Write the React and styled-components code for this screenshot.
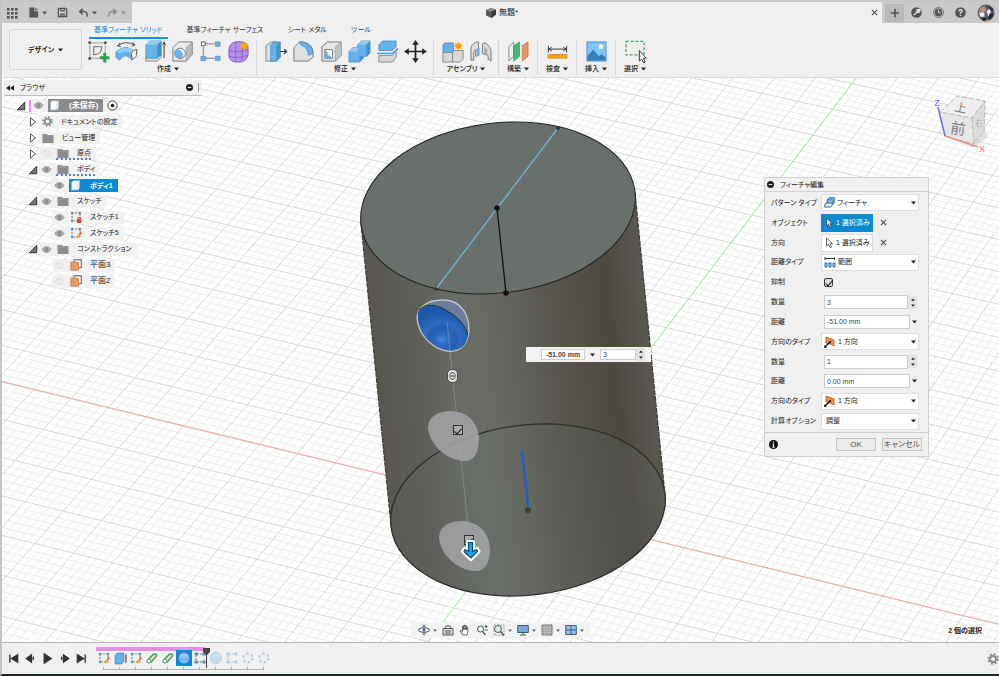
import React, { useState } from 'react';
import styled, { createGlobalStyle } from 'styled-components';

const GlobalStyle = createGlobalStyle`
  * { box-sizing: border-box; }
  body {
    margin: 0;
    background: #f0f0f0;
    color: #222;
    font-family: 'Liberation Sans', 'Noto Sans CJK JP', sans-serif;
    font-size: 8px;
    line-height: 12px;
    font-feature-settings: 'palt';
  }
  button, input, select {
    font: inherit;
    font-feature-settings: inherit;
    color: inherit;
    margin: 0;
    padding: 0;
  }
  svg { display: block; flex: none; }
`;

/* ---------- layout ---------- */

const Page = styled.div`
  min-height: 100vh;
  display: flex;
  flex-direction: column;
  border-left: 2px solid #c4c4c4;
  border-bottom: 2px solid #15262b;
`;

const TopBar = styled.header`
  display: flex;
  height: 23px;
  border-top: 2px solid #c6c6c6;
  background: #c9c9c9;
`;

const QuickBar = styled.div`
  display: flex;
  align-items: center;
  width: 130px;
  padding-left: 4px;
  gap: 10px;
`;

const IconButton = styled.button`
  display: flex;
  align-items: center;
  justify-content: center;
  gap: 3px;
  border: 0;
  background: none;
  color: ${(p) => (p.$dim ? '#8d8d8d' : '#555')};
  cursor: pointer;
`;

const DocTab = styled.div`
  flex: 1;
  display: flex;
  align-items: center;
  background: #f0f0f0;
  padding-right: 4px;
`;

const DocTitle = styled.h1`
  flex: 1;
  display: flex;
  align-items: center;
  justify-content: center;
  gap: 2px;
  margin: 0;
  font-size: 8px;
  font-weight: 400;
`;

const AccountBar = styled.div`
  display: flex;
  align-items: center;
  width: 117px;
  gap: 11px;
`;

const NewTab = styled(IconButton)`
  width: 19px;
  height: 18px;
  margin-left: 3px;
  margin-right: -4px;
  background: #b9b9b9;
`;

const Ribbon = styled.div`
  display: flex;
  height: 55px;
  border-bottom: 1px solid #dcdcdc;
  background: #f0f0f0;
`;

const Workspace = styled.button`
  width: 73px;
  margin: 6px 2px 7px 7px;
  border: 1px solid #d6d6d6;
  border-radius: 3px;
  background: #f0f0f0;
  display: flex;
  align-items: center;
  justify-content: center;
  gap: 4px;
  font-size: 7px;
  font-weight: 700;
`;

const RibbonMain = styled.div`
  flex: 1;
`;

const Tabs = styled.nav`
  display: flex;
  gap: 14px;
  height: 16px;
  padding-left: 5px;
`;

const Tab = styled.a`
  padding: 1px 5px 0;
  font-size: 7px;
  text-decoration: none;
  white-space: nowrap;
  color: ${(p) => (p.$active ? '#1287c9' : '#333')};
  border-bottom: 2px solid ${(p) => (p.$active ? '#1493d6' : 'transparent')};
`;

const Groups = styled.div`
  display: flex;
  margin-top: 1px;
  height: 35px;
`;

const Group = styled.div`
  display: flex;
  flex-direction: column;
  align-items: center;
  min-width: 39px;
  padding: 0 4px;
  border-right: 1px solid ${(p) => (p.$last ? 'transparent' : '#d8d8d8')};
  &:first-child { padding-left: 0; }
`;

const GroupIcons = styled.div`
  display: flex;
`;

const Tool = styled(IconButton)`
  width: 28px;
  height: 23px;
`;

const GroupMenu = styled(IconButton)`
  height: 12px;
  font-size: 7px;
  font-weight: 500;
  color: #222;
  white-space: nowrap;
`;

/* ---------- canvas ---------- */

const Canvas = styled.main`
  flex: 1;
  position: relative;
  overflow: hidden;
  min-height: 480px;
  background: #fff;
`;

const Scene = styled.svg`
  position: absolute;
  inset: 0;
  width: 100%;
  height: 100%;
`;

const Browser = styled.aside`
  position: absolute;
  left: 2px;
  top: 2px;
  width: 198px;
`;

const BrowserHeader = styled.div`
  display: flex;
  align-items: center;
  height: 16px;
  padding: 0 2px;
  gap: 4px;
  background: #f0f0f0;
  border-bottom: 1px solid #bdbdbd;
  font-size: 7px;
  span { flex: 1; padding-left: 2px; }
`;

const Tree = styled.div`
  display: grid;
  grid-template-rows: repeat(12, 1fr);
  height: 191px;
  margin-top: 2px;
`;

const INDENT = [11, 23, 48];

const TreeRow = styled.div`
  display: flex;
  align-items: center;
  padding-left: ${(p) => INDENT[p.$level]}px;
`;

const Toggle = styled(IconButton)`
  width: 12px;
  height: 12px;
`;

const RootMark = styled.i`
  width: 2px;
  height: 12px;
  margin-left: 2px;
  background: #e58be5;
`;

const Chip = styled.div`
  display: flex;
  align-items: center;
  gap: 4px;
  height: 13px;
  padding: 0 ${(p) => (p.$flush ? 0 : 5)}px 0 2px;
  background: #f1f1f1;
`;

const Name = styled.span`
  display: flex;
  align-items: center;
  gap: ${(p) => p.$gap}px;
  height: 13px;
  white-space: nowrap;
  font-size: ${(p) => (p.$small ? 7 : 8)}px;
  font-weight: ${(p) => (p.$tone ? 700 : 400)};
  color: ${(p) => (p.$tone ? '#fff' : '#222')};
  background: ${(p) => p.$tone || 'none'};
  padding: 0 ${(p) => (p.$tone ? 5 : 0)}px 0 1px;
  border-bottom: ${(p) => (p.$hatched ? '2px dotted #5f7fae' : '0')};
`;

const CubeBox = styled.div`
  position: absolute;
  top: 12px;
  right: 6px;
`;

const NavBar = styled.div`
  position: absolute;
  left: 50%;
  bottom: 4px;
  transform: translateX(-50%);
  display: flex;
  align-items: center;
  gap: 5px;
  height: 16px;
  padding: 0 7px;
  background: #f3f3f3;
`;

const Status = styled.output`
  position: absolute;
  right: 17px;
  bottom: 5px;
  font-size: 7px;
  font-weight: 700;
`;

/* in-canvas controls, placed on the model */
const Pin = styled.div`
  position: absolute;
  left: ${(p) => p.$x}px;
  top: ${(p) => p.$y}px;
  display: flex;
`;

const QuickInput = styled(Pin)`
  align-items: center;
  width: 125px;
  height: 15px;
  padding: 0 6px 0 15px;
  gap: 5px;
  background: #f2f2f2;
  font-size: 7px;
`;

const Check = styled.input.attrs({ type: 'checkbox' })`
  appearance: none;
  width: ${(p) => (p.$round ? 9 : 10)}px;
  height: ${(p) => (p.$round ? 9 : 10)}px;
  border: 1px solid #333;
  border-radius: ${(p) => (p.$round ? 2 : 0)}px;
  background: ${(p) => (p.$round ? '#ddd' : '#a9a9ab')};
  display: grid;
  place-content: center;
  &:checked::after {
    content: '';
    width: 3px;
    height: 6px;
    border: solid #111;
    border-width: 0 1px 1px 0;
    transform: rotate(40deg);
  }
`;

/* ---------- dialog ---------- */

const Dialog = styled.form`
  position: absolute;
  top: 99px;
  right: 70px;
  width: 165px;
  background: #f0f0f0;
  border: 1px solid #cfcfcf;
  font-size: 7px;
`;

const DialogTitle = styled.h2`
  display: flex;
  align-items: center;
  gap: 6px;
  height: 14px;
  margin: 0;
  padding-left: 2px;
  font-size: 7px;
  font-weight: 400;
  border-bottom: 1px solid #d4d4d4;
`;

const Fields = styled.div`
  display: grid;
  grid-template-rows: repeat(12, 1fr);
  height: 240px;
  padding: 1px 9px 1px 6px;
`;

const Field = styled.div`
  display: grid;
  grid-template-columns: 50px 1fr;
  align-items: center;
`;

const SelectBox = styled.span`
  position: relative;
  display: flex;
  align-items: center;
  height: 17px;
  padding: 0 2px;
  background: #fff;
  border: 1px solid #dedede;
  select {
    flex: 1;
    min-width: 0;
    height: 15px;
    padding-left: 2px;
    appearance: none;
    border: 0;
    background: none;
  }
`;

const Picked = styled.div`
  display: flex;
  align-items: center;
  gap: 7px;
`;

const Pick = styled.button`
  display: flex;
  align-items: center;
  gap: 2px;
  width: 52px;
  height: 18px;
  padding: 0 3px;
  border: 1px solid ${(p) => (p.$active ? '#0a8ad2' : '#dcdcdc')};
  background: ${(p) => (p.$active ? '#0a8ad2' : '#fff')};
  color: ${(p) => (p.$active ? '#fff' : '#222')};
  white-space: nowrap;
`;

const Inset = styled.div`
  display: flex;
  padding-left: 3px;
`;

const ValueBox = styled.span`
  display: flex;
  align-items: center;
  gap: 2px;
  padding-left: ${(p) => (p.$inset ? 3 : 0)}px;
  input {
    width: ${(p) => p.$w}px;
    height: ${(p) => (p.$inset ? 14 : 11)}px;
    padding: 0 2px;
    border: 1px solid #cdcdcd;
    background: #fff;
    color: #444;
    font-weight: ${(p) => (p.$strong ? 700 : 400)};
    text-align: ${(p) => (p.$strong ? 'center' : 'left')};
  }
`;

const Spinner = styled.span`
  display: flex;
  flex-direction: column;
  justify-content: center;
  width: 9px;
  height: 13px;
  margin-left: -2px;
  background: #e2e2e2;
  button {
    display: flex;
    align-items: center;
    justify-content: center;
    height: 6px;
    border: 0;
    background: none;
  }
`;

const DialogFooter = styled.div`
  display: flex;
  align-items: center;
  gap: 6px;
  height: 24px;
  padding: 0 6px 0 4px;
  border-top: 1px solid #cfcfcf;
  svg { margin-right: auto; }
`;

const DialogButton = styled.button`
  width: 40px;
  height: 13px;
  border: 1px solid #c2c2c2;
  background: #ececec;
  color: #555;
  font-size: 8px;
  line-height: 10px;
  white-space: nowrap;
`;

/* ---------- timeline ---------- */

const Timeline = styled.footer`
  display: flex;
  align-items: center;
  height: 32px;
  padding: 0 0 0 5px;
  border-top: 1px solid #b5b5b5;
  background: #f0f0f0;
`;

const Player = styled.div`
  display: flex;
  gap: 4px;
  button { width: 13px; height: 14px; color: #333; }
`;

const Track = styled.div`
  position: relative;
  margin: 1px auto 0 8px;
  padding-top: 4px;
  &::before {
    content: '';
    position: absolute;
    left: 0;
    top: 1px;
    width: 109px;
    height: 4px;
    background: #e392e3;
  }
`;

const Steps = styled.div`
  display: flex;
`;

const Step = styled.button`
  position: relative;
  display: flex;
  justify-content: center;
  align-items: center;
  width: 16px;
  height: 16px;
  border: 0;
  background: ${(p) => (p.$active ? '#0a8ad2' : 'none')};
  opacity: ${(p) => (p.$rolledBack ? 0.35 : 1)};
`;

const Marker = styled.svg`
  position: absolute;
  left: 106px;
  top: 1px;
`;

/* ---------- small icons ---------- */

function Caret({ up, s = 5 }) {
  return (
    <svg width={s} height={s - 1} viewBox="0 0 5 4" fill="currentColor">
      <path d={up ? 'M0 3.5h5L2.5.5z' : 'M0 .5h5L2.5 3.5z'} />
    </svg>
  );
}

function Icon({ w = 12, h, vb = '0 0 12 12', children }) {
  return (
    <svg width={w} height={h || w} viewBox={vb} fill="none" stroke="currentColor" strokeWidth="1">
      {children}
    </svg>
  );
}

const GridIcon = () => (
  <Icon w={12}>
    <g fill="currentColor" stroke="none">
      {[1, 5, 9].map((y) => [1, 5, 9].map((x) => <rect key={`${x}${y}`} x={x} y={y} width="2.6" height="2.6" />))}
    </g>
  </Icon>
);
const FileIcon = () => (
  <Icon w={11}><path d="M1.5.5H7v4h4v7H1.5zM8 .5l3 3H8z" fill="currentColor" stroke="none" /></Icon>
);
const SaveIcon = () => (
  <Icon w={11}>
    <path d="M1.5 1.5h8l1 1v8h-9z" strokeWidth="1.5" />
    <path d="M3.5 1.5h5v3.2h-5zM3.5 7h5v4h-5z" fill="currentColor" stroke="none" />
    <path d="M5 9h2M4.5 2.8h3" stroke="#c9c9c9" />
  </Icon>
);
const UndoIcon = ({ flip }) => (
  <Icon w={11}>
    <g transform={flip ? 'matrix(-1 0 0 1 12 0)' : undefined}>
      <path d="M5 2 2 5l3 3M2 5h4.5q4 0 3.5 5.5" strokeWidth="1.7" />
    </g>
  </Icon>
);
const CloseIcon = () => <Icon w={7}><path d="m1.5 1.5 9 9m0-9-9 9" strokeWidth="2" /></Icon>;
const PlusIcon = () => <Icon w={10}><path d="M6 1v10M1 6h10" strokeWidth="2" /></Icon>;
const JobIcon = () => (
  <Icon w={11}>
    <circle cx="6" cy="6" r="5.8" fill="currentColor" stroke="none" />
    <path d="m3.2 8.8 3.6-3.6M6.2 5q0-2.600 2.600-2.300L7.600 4l.7.8 1.400-1Q9.600 6.200 7 6" stroke="#e2e2e2" strokeWidth="1.5" />
  </Icon>
);
const ClockIcon = () => (
  <Icon w={11}>
    <circle cx="6" cy="6" r="5.3" strokeWidth=".9" />
    <circle cx="6" cy="6" r="4" fill="currentColor" stroke="none" />
    <path d="M6 3v3.2h2.5" stroke="#ddd" />
  </Icon>
);
const HelpIcon = () => (
  <Icon w={11}>
    <circle cx="6" cy="6" r="5.8" fill="currentColor" stroke="none" />
    <path d="M4.200 4.800Q4.300 3 6 3t1.800 1.500Q7.800 5.600 6 6.200v1.200M6 8.400v1.300" stroke="#e5e5e5" strokeWidth="1.4" />
  </Icon>
);
const Avatar = () => (
  <Icon w={18} vb="0 0 17 17">
    <circle cx="8.5" cy="8.5" r="8" fill="#59616d" stroke="none" />
    <path d="M3 3.5 7 2l2 4-3 2-4-1z" fill="#b98f84" stroke="none" />
    <path d="M2 8h5v4H3zM9 7l3-3 1 4-2 4z" fill="#eee" stroke="none" />
    <path d="M4 13h6v3H6zM12 9h4l-2 4-4 2z" fill="#1c2536" stroke="none" />
    <path d="m8 15 3-1v2H8z" fill="#d78640" stroke="none" />
    <path d="M9 1.500 15 4v3l-3-2z" fill="#263042" stroke="none" />
  </Icon>
);
const DocIcon = () => (
  <Icon w={12}>
    <path d="m1 3 5-2 5 1.500v5L6.500 11 1 8.500z" fill="#5a5a5a" stroke="none" />
    <path d="m1 3 5.300 1.700L11 2.500 6 1z" fill="#8c8c8c" stroke="none" />
    <path d="M6.400 4.700V11L11 7.500v-5z" fill="#3a3a3a" stroke="none" />
  </Icon>
);
const MinusDot = () => (
  <Icon w={7}>
    <circle cx="6" cy="6" r="6" fill="#222" stroke="none" />
    <path d="M3 6h6" stroke="#fff" strokeWidth="1.5" />
  </Icon>
);
const InfoDot = () => (
  <Icon w={9}>
    <circle cx="6" cy="6" r="6" fill="#111" stroke="none" />
    <path d="M6 2v1.800M4.800 5.500H6v4M4.600 9.500h2.800" stroke="#fff" strokeWidth="1.5" />
  </Icon>
);
const Eye = ({ off }) => (
  <Icon w={11} h={9} vb="0 0 12 10">
    {off ? (
      <g stroke="#d6d6d6"><path d="M1 5q5-6 10 0-5 6-10 0zM2 1l8 8" /></g>
    ) : (
      <g stroke="#8e8e8e">
        <path d="M.8 5Q6-1.500 11.200 5 6 11.500.8 5z" fill="#b9b9b9" />
        <circle cx="6" cy="5" r="2" fill="#777" />
        <circle cx="6" cy="5" r=".6" fill="#fff" stroke="none" />
      </g>
    )}
  </Icon>
);
const Folder = () => (
  <Icon w={12} h={10} vb="0 0 12 10">
    <path d="M.5 1h4l1 1h6v8H.5z" fill="#8c8c8c" stroke="none" />
    <path d="M.5 3h11" stroke="#adadad" strokeWidth=".6" />
  </Icon>
);
const Gear = ({ s = 11 }) => (
  <Icon w={s}>
    <circle cx="6" cy="6" r="3" stroke="#868686" strokeWidth="1.8" />
    <circle cx="6" cy="6" r="4.8" stroke="#868686" strokeWidth="1.8" strokeDasharray="1.9 1.87" />
  </Icon>
);
const BodyIcon = () => (
  <Icon w={11}>
    <path d="M1.500 2.500 3.500.8h7v8L8.500 11h-7z" fill="#fff" stroke="#9fb0bd" />
    <path d="M8.500 11V2.700l2-1.900" stroke="#cfd6db" />
  </Icon>
);
const SketchIcon = ({ lock }) => (
  <Icon w={12}>
    <path d="M2 2h8v8H2z" stroke="#777" strokeDasharray="2 1" />
    <path d="M1 1h2v2H1zM9 1h2v2H9zM1 9h2v2H1z" fill={lock ? '#888' : '#4a9bdc'} stroke="none" />
    {lock ? (
      <g>
        <path d="M7 8h4.500v4H7z" fill="#d2474e" stroke="none" />
        <path d="M8 8V6.500h2.500V8" stroke="#d2474e" />
      </g>
    ) : (
      <g>
        <path d="m6.500 11 4-4.500" stroke="#f0a63a" strokeWidth="2" />
        <path d="m9.800 7 1.400-1.500" stroke="#e25353" strokeWidth="2" />
      </g>
    )}
  </Icon>
);
const PlaneIcon = () => (
  <Icon w={12}>
    <path d="M4 .8h7.200v8H4z" stroke="#555" fill="#fff" />
    <path d="M.8 3.200h7.700v8H.8z" fill="#e99a67" stroke="#cf7740" strokeWidth=".8" />
  </Icon>
);
const Expand = ({ open }) => (
  <Icon w={10}>
    {open ? <path d="M10.500 1.500v9H1.500z" fill="#777" stroke="#222" /> : <path d="M3 1v10l6-5z" fill="#fff" stroke="#333" />}
  </Icon>
);
const Cursor = ({ fill = '#fff' }) => (
  <Icon w={9} h={12} vb="0 0 9 12">
    <path d="M1.500 1v8l2-1.800 1.500 3.500 1.500-.7L5 6.700h2.500z" fill={fill} stroke="#444" strokeWidth=".8" />
  </Icon>
);
const FeatureIcon = () => (
  <Icon w={11}>
    <path d="M3.500 3 5.500.8h5.700v5.400L9.500 8h-6z" fill="#8fb9ea" stroke="#2c5c9f" />
    <path d="M9.500 8V3h-6" stroke="#2c5c9f" strokeWidth=".7" />
    <path d="M.8 9Q.8 6.500 3 6.500h4.500L9.500 8l-2 3H.8z" fill="#dbe9f8" stroke="#2c5c9f" />
  </Icon>
);
const ExtentIcon = () => (
  <Icon w={12}>
    <path d="M1 1v3M10.500 1v3M1 2.500h9.500" stroke="#333" />
    <path d="M1 7h2v4H1zM5 7h2v4H5zM9 7h2v4H9z" stroke="#2d62b8" fill="#c9dcf8" />
  </Icon>
);
const DirectionIcon = () => (
  <Icon w={12}>
    <path d="m2 1 8 3v6L6 8 2 7z" fill="#ee924e" stroke="#b85a1c" strokeWidth=".8" />
    <path d="m1 11 5-5" stroke="#111" strokeWidth="1.3" />
    <path d="M7.500 4.800 4.500 6l1.800 1.800zM0 12l.6-3L3 11.400z" fill="#111" stroke="none" />
  </Icon>
);

/* ---------- ribbon icons, all on a 24 grid ---------- */

const Big = ({ children }) => <Icon w={23} vb="0 0 24 24">{children}</Icon>;
const BLUE = '#66b1e8';
const LIGHT = '#93cbf3';
const SHADE = '#458fca';
const DARK = '#3a80ba';
const star = 'm18 1 1 3 2.600-1.600L20.500 5l3 1-3 1 1.100 2.600L19 8.500l-1 3-1-3-2.600 1.100L15.500 7l-3-1 3-1-1.100-2.600L17 4z';

const ribbonIcons = {
  sketch: (
    <Big>
      <path d="M3 3h16v16H3z" stroke="#888" strokeWidth=".8" />
      <path d="M7 7h8.500q0 8-8.500 8.500z" stroke="#555" strokeWidth=".9" />
      <path d="M1.500 1.500h2.500v2.500H1.500zM18 1.500h2.500v2.500H18zM1.500 18h2.500v2.500H1.500z" fill="#444" stroke="none" />
      <path d="M18.500 13.500v10M13.500 18.500h10" stroke="#23a347" strokeWidth="3" />
    </Big>
  ),
  revolve: (
    <Big>
      <path d="M1 12Q11 4 19 11l-1 10-3-3q-4-3-8 0l-2 3-4-3z" fill={BLUE} stroke={DARK} strokeWidth=".7" />
      <path d="M1 12Q11 4 19 11l-2 3q-6-4-12 0z" fill={LIGHT} stroke="none" />
      <path d="m19 11 4-1-1 7-4 4-1-7z" fill="#fff" stroke="#555" />
      <path d="M3 6q8-6 17-1M18 2.500l3 2.500-3.500 1.500M5.500 3 2.500 6 6 7" stroke="#444" />
    </Big>
  ),
  extrude: (
    <Big>
      <path d="M3 18v4h12l4-4v-3z" fill="#ddd" stroke="#888" />
      <path d="M3 5 7 1h12v14l-4 4H3z" fill={BLUE} stroke={DARK} strokeWidth=".7" />
      <path d="M3 5h12l4-4H7z" fill={LIGHT} stroke="none" />
      <path d="M15 5v14l4-4V1z" fill={SHADE} stroke="none" />
      <path d="M22 19V3M20.500 5 22 2l1.500 3" stroke="#333" />
    </Big>
  ),
  hole: (
    <Big>
      <path d="M2 8 8 2h14v13l-6 7H2z" fill="#ececec" stroke="#777" />
      <path d="M16 8v14l6-7V2z" fill="#bcbcbc" stroke="#888" strokeWidth=".7" />
      <circle cx="9.5" cy="14" r="5.5" fill="#eaf5fd" stroke="#777" />
      <path d="M7 9.500q7 3 5 8.500-3 2-6.500-.5T5 10.500z" fill={BLUE} stroke="none" />
    </Big>
  ),
  pattern: (
    <Big>
      <path d="M7 4h9M4.500 7v9M7 19h9" stroke="#777" />
      <path d="M2.500 2h4v4h-4z" fill="#fff" stroke="#555" />
      <path d="M17 2h5v4.500h-5zM2 17h5v4.500H2zM17 17h5v4.500h-5z" fill={BLUE} stroke={DARK} strokeWidth=".6" />
    </Big>
  ),
  form: (
    <Big>
      <path d="M2 10q0-5 4-7t10-1 6 7v6q-1 7-8 8-12 1-12-7z" fill="#b690e8" stroke="#8258c2" />
      <path d="M2 11q10 3 20-1M9 2v21M16 3v18M2 17q9 3 20-1" stroke="#8258c2" strokeWidth=".8" />
      <path d={star} fill="#f8a319" stroke="none" />
    </Big>
  ),
  press: (
    <Big>
      <path d="M2 6 7 2h6v20H2z" fill="#dcdcdc" stroke="#888" />
      <path d="m7 5 3-3h7v16l-4 4H7z" fill={BLUE} stroke={DARK} strokeWidth=".7" />
      <path d="M13 5v17l4-4V2z" fill={SHADE} stroke="none" />
      <path d="M17 12h6M21 9.500l2.500 2.500-2.500 2.500" stroke="#333" strokeWidth="1.3" />
    </Big>
  ),
  fillet: (
    <Big>
      <path d="m2 8 6-6h3q11 2 11 12v4l-5 4H2z" fill="#dedede" stroke="#777" />
      <path d="M8 2h4q10 3 10 12l-5 2q0-8-8-11z" fill={BLUE} stroke={DARK} strokeWidth=".7" />
    </Big>
  ),
  shell: (
    <Big>
      <path d="M2 7 8 2h14v14l-6 6H2z" fill="#e6e6e6" stroke="#777" />
      <path d="M16 7v15l6-6V2z" fill="#c6c6c6" stroke="#999" strokeWidth=".7" />
      <path d="M5 10h8v9H5z" fill="#fff" stroke="#777" />
      <path d="M5 10v9h8l-3-3H8v-3z" fill={BLUE} stroke="none" />
    </Big>
  ),
  combine: (
    <Big>
      <path d="m10 5 4-4h9v12l-3 4h-4v2l-4 4H1V12l4-4h5z" fill={BLUE} stroke={DARK} strokeWidth=".7" />
      <path d="M10 5h9l4-4h-9zM1 12l4-4h5v4z" fill={LIGHT} stroke="none" />
      <path d="M19 5v12l4-4V1zM12 17v6l4-4v-2z" fill={SHADE} stroke="none" />
    </Big>
  ),
  split: (
    <Big>
      <path d="m3 5 4-4h14v6l-4 4H3z" fill={BLUE} stroke={DARK} strokeWidth=".7" />
      <path d="M3 16h14l4-4v6l-4 5H3z" fill="#d8d8d8" stroke="#888" />
      <path d="M1 14h16l6-5" stroke="#3b9be0" strokeWidth="1.4" />
    </Big>
  ),
  move: (
    <Big>
      <path d="M12 3v18M3 12h18" stroke="#222" strokeWidth="1.8" />
      <path d="m12 0 3.500 5h-7zM12 24l3.500-5h-7zM0 12l5-3.500v7zM24 12l-5-3.500v7z" fill="#222" stroke="none" />
    </Big>
  ),
  component: (
    <Big>
      <path d="m2 5 2-2h9v10H2z" fill={BLUE} stroke={DARK} strokeWidth=".7" />
      <path d="M2 13h10v10H2zM12 13l2-2h9v9l-3 3h-8z" fill="#d9d9d9" stroke="#888" />
      <path d={star} fill="#f8a319" stroke="none" />
    </Big>
  ),
  joint: (
    <Big>
      <path d="M2 8q2-6 8-6v14l-3 1V10l-2 2v9H2zM14 4l3-1q5 3 6 8v11l-3-2v-4l-6-2z" fill="#ddd" stroke="#777" />
      <path d="m8 9 3-1v8l-3 1z" fill={BLUE} stroke="none" />
      <path d="m16 7 3 3v5l-3-1z" fill="#aaa" stroke="none" />
    </Big>
  ),
  plane: (
    <Big>
      <path d="m2 7 5-5v15l-5 5z" fill="#eee" stroke="#888" />
      <path d="m7 6 6-4v15l-6 5z" fill="#43bb74" stroke="#2c9459" strokeWidth=".7" />
      <path d="m16 6 6-4v15l-6 5z" fill="#e99360" stroke="#c37240" strokeWidth=".7" />
    </Big>
  ),
  measure: (
    <Big>
      <path d="M2.500 6v7M21.500 6v7M3 9.500h18M6 7.500l-3 2 3 2M18 7.500l3 2-3 2" stroke="#333" />
      <path d="M2 15h20v4H2z" fill="#f5a91d" stroke="#cb8410" strokeWidth=".7" />
      <path d="M5 15v2M8 15v2M11 15v2M14 15v2M17 15v2" stroke="#9b620a" strokeWidth=".6" />
    </Big>
  ),
  insert: (
    <Big>
      <path d="M2 2h20v20H2z" fill="#7cc7f8" stroke="#3b83b8" strokeWidth=".8" />
      <circle cx="16.5" cy="7" r="2.5" fill="#fff6c9" stroke="none" />
      <path d="m2.500 17 6-7 6 7 3-2.500 4 4v3h-19z" fill="#347fb5" stroke="none" />
    </Big>
  ),
  select: (
    <Big>
      <path d="M2 1.500h19v14H2z" stroke="#3aa865" strokeWidth="1.3" strokeDasharray="3 2" />
      <path d="M16 11v11l2.500-2 2 4 1.700-1-2-4h3z" fill="#fff" stroke="#333" />
    </Big>
  ),
};

const ribbonGroups = [
  { label: '作成', icons: ['sketch', 'revolve', 'extrude', 'hole', 'pattern', 'form'] },
  { label: '修正', icons: ['press', 'fillet', 'shell', 'combine', 'split', 'move'] },
  { label: 'アセンブリ', icons: ['component', 'joint'] },
  { label: '構築', icons: ['plane'] },
  { label: '検査', icons: ['measure'] },
  { label: '挿入', icons: ['insert'] },
  { label: '選択', icons: ['select'] },
];

/* ---------- scene ---------- */

// ground grid: u runs along the red axis, v along the green one
const ORIGIN = [528, 510];
function project(u, v) {
  const w = 1 + u * -0.00004 + v * 0.0002;
  return [ORIGIN[0] + (u * 0.971 + v * 0.605) / w, ORIGIN[1] + (u * 0.236 - v * 0.796) / w];
}

function gridPath(major) {
  let d = '';
  for (let i = -110; i <= 110; i++) {
    if ((i % 5 === 0) !== major) continue;
    const s = i * 8;
    const a = project(s, -700), b = project(s, 1100);
    const c = project(-1100, s), e = project(1300, s);
    d += `M${a}L${b}M${c}L${e}`;
  }
  return d;
}

const MINOR = gridPath(false);
const MAJOR = gridPath(true);
const COPY = 'M428 428C428 415 440 411 452 411 469 412 479 424 479 441 478 454 474 461 464 461 447 460 430 446 428 428z';

// wall shading, shared by the side and the face seen through it
const shading = [
  [0, '#5a5751'],
  [0.12, '#5d5c56'],
  [0.34, '#6a6d67'],
  [0.48, '#66665f'],
  [0.66, '#595650'],
  [0.86, '#4d4941'],
  [1, '#5b5851'],
].map(([offset, color]) => <stop key={offset} offset={offset} stopColor={color} />);

function Model() {
  return (
    <Scene aria-label="モデル">
      <defs>
        <linearGradient id="side" gradientUnits="userSpaceOnUse" x1="375" y1="375" x2="650" y2="348">{shading}</linearGradient>
        <linearGradient id="base" gradientUnits="userSpaceOnUse" x1="-138" y1="0" x2="138" y2="0">{shading}</linearGradient>
        <radialGradient id="ball" cx=".48" cy=".75" r=".6">
          <stop offset="0" stopColor="#4f8ade" />
          <stop offset=".22" stopColor="#2c68c0" />
          <stop offset=".45" stopColor="#245fb2" />
          <stop offset=".62" stopColor="#2f6abf" />
          <stop offset="1" stopColor="#1e58ab" />
        </radialGradient>
      </defs>
      <g transform="translate(-2 -78)" fill="none">
        <path d={MINOR} stroke="#eeeeee" />
        <path d={MAJOR} stroke="#d9d9d9" />
        <path d="M0 381 1400 722" stroke="#f5a5a5" />
        <path d="M427 643 857 77" stroke="#9df09d" />

        <path d="M361 223 391 525 665 495 635 193z" fill="url(#side)" />
        <g transform="translate(528 510) rotate(-7)">
          <ellipse rx="138" ry="85" fill="url(#base)" />
          <ellipse rx="138" ry="85" fill="#6f7c7a" fillOpacity=".12" stroke="#2e2e2c" strokeWidth="1.3" />
        </g>
        <path d="M361 223 391 525M635 193l30 302" stroke="#3c3a36" strokeWidth="1.2" strokeDasharray="5 1" />
        <ellipse rx="138" ry="85" transform="translate(498 208) rotate(-7)" fill="#69706c" stroke="#222" />

        <path d="M558 128 436 289" stroke="#6fb5d6" strokeWidth="1.3" />
        <path d="m497 208 9 85" stroke="#111" strokeWidth="1.3" />
        <g fill="#111">
          <circle cx="497" cy="208" r="2.7" />
          <circle cx="506" cy="293" r="2.7" />
          <circle cx="558" cy="128" r="2" fill="#333" />
          <circle cx="436" cy="289" r="1.7" fill="#333" />
        </g>

        <path
          d="M417 317C419 303 433 300 443 300 459 300 469 312 469 330 468 345 461 351 450 351.500 435 350 418 337 417 317z"
          fill="#6b7d98" stroke="#c6c6c6" strokeWidth="1.3"
        />
        <path d="M418 312C424 305 435 303 447 311 458 317 466 326 468 336 466 347 459 350.500 450 350.500 435 349 417 337 418 312z" fill="url(#ball)" />
        <path d="M419 310C425 304 435 303 447 311 458 317 466 326 468 335" stroke="#232c3c" />
        <path d="M447 322 469 536" stroke="#b5b5b5" strokeOpacity=".4" />
        <path d={COPY} fill="#a6a7aa" fillOpacity=".82" />
        <path d={COPY} transform="translate(11 110)" fill="#a6a7aa" fillOpacity=".82" />
        <path d="m522 451 6 55" stroke="#1d63ba" strokeWidth="2.4" />
        <circle cx="528" cy="510" r="3" fill="#3d3c44" />

        <rect x="447.5" y="369.5" width="10" height="13" rx="4" fill="#ddd" stroke="#444" />
        <path d="M450 374.500q2.500-4 5 0M450 377.500q2.500 4 5 0M449 376h7" stroke="#333" />
      </g>
    </Scene>
  );
}

function ViewCube() {
  return (
    <CubeBox>
      <svg width="62" height="66" viewBox="931 90 62 66" fill="none">
        <path d="m948 138 26 10 14-12-4-8z" fill="#ccc" fillOpacity=".6" />
        <path d="m940 112 17-16 28 5-13 17z" fill="#efefef" />
        <path d="m940 112 32 6 2 26-29-8z" fill="#e6e6e6" />
        <path d="m972 118 13-17-1 30-10 13z" fill="#dcdcdc" />
        <path d="m940 112 17-16 28 5-13 17zM972 118l2 26 10-13 1-30M945 136l29 8" stroke="#b5b5b5" strokeDasharray="5 2" />
        <path d="m938 107 7 29" stroke="#6a6aee" strokeWidth="1.5" />
        <path d="m945 136 33 11" stroke="#ee7272" strokeWidth="1.3" />
        <g fill="#7d8185" fontSize="15" textAnchor="middle">
          <text x="961" y="112" transform="rotate(12 961 107)" fontSize="12">上</text>
          <text x="958" y="134" transform="rotate(8 958 128)">前</text>
          <text x="979" y="126" fontSize="8" fillOpacity=".5">右</text>
          <text x="937" y="106" fontSize="9" fill="#6a6aee">Z</text>
          <text x="982" y="152" fontSize="9" fill="#ee6a6a">X</text>
        </g>
      </svg>
    </CubeBox>
  );
}

/* ---------- browser ---------- */

const tree = [
  { level: 1, toggle: 'closed', icon: <Gear />, name: 'ドキュメントの設定', noEye: true, small: true },
  { level: 1, toggle: 'closed', icon: <Folder />, name: 'ビュー管理', noEye: true, small: true },
  { level: 1, toggle: 'closed', off: true, icon: <Folder />, name: '原点', hatched: true, small: true },
  { level: 1, toggle: 'open', icon: <Folder />, name: 'ボディ', hatched: true, small: true },
  { level: 2, icon: <BodyIcon />, name: 'ボディ1', tone: '#0a8ad2', small: true },
  { level: 1, toggle: 'open', icon: <Folder />, name: 'スケッチ', small: true },
  { level: 2, icon: <SketchIcon lock />, name: 'スケッチ1', small: true },
  { level: 2, icon: <SketchIcon />, name: 'スケッチ5', small: true },
  { level: 1, toggle: 'open', icon: <Folder />, name: 'コンストラクション', small: true },
  { level: 2, off: true, icon: <PlaneIcon />, name: '平面3' },
  { level: 2, off: true, icon: <PlaneIcon />, name: '平面2' },
];

function BrowserPanel() {
  return (
    <Browser>
      <BrowserHeader>
        <Icon w={8}><path d="M6 2v8L0 6zM12 2v8L6 6z" fill="#222" stroke="none" /></Icon>
        <span>ブラウザ</span>
        <MinusDot />
        <Icon w={3} h={9} vb="0 0 3 9"><path d="M1.500 0v9" stroke="#999" /></Icon>
      </BrowserHeader>
      <Tree>
        <TreeRow $level={0}>
          <Toggle aria-label="折りたたむ"><Expand open /></Toggle>
          <RootMark />
          <Chip $flush>
            <Eye />
            <Name $tone="#8b8b8b" $gap={9}><BodyIcon />(未保存)</Name>
            <Icon w={11}>
              <circle cx="6" cy="6" r="5" fill="#fff" stroke="#333" />
              <circle cx="6" cy="6" r="2" fill="#222" stroke="none" />
            </Icon>
          </Chip>
        </TreeRow>
        {tree.map((row) => (
          <TreeRow key={row.name} $level={row.level}>
            {row.toggle && <Toggle aria-label={row.name}><Expand open={row.toggle === 'open'} /></Toggle>}
            <Chip $flush={!!row.tone}>
              {!row.noEye && <Eye off={row.off} />}
              <Name $tone={row.tone} $small={row.small} $hatched={row.hatched} $gap={row.tone ? 9 : 8}>
                {row.icon}
                {row.name}
              </Name>
            </Chip>
          </TreeRow>
        ))}
      </Tree>
    </Browser>
  );
}

/* ---------- dialog ---------- */

function SelectField({ id, label, icon, value }) {
  return (
    <Field>
      <label htmlFor={id}>{label}</label>
      <SelectBox>
        {icon}
        <select id={id}><option>{value}</option></select>
        <Caret />
      </SelectBox>
    </Field>
  );
}

function Spin() {
  return (
    <Spinner>
      <button type="button" aria-label="増やす"><Caret up s={4} /></button>
      <button type="button" aria-label="減らす"><Caret s={4} /></button>
    </Spinner>
  );
}

function ValueField({ id, label, value, spin }) {
  return (
    <Field>
      <label htmlFor={id}>{label}</label>
      <ValueBox $inset $w={spin ? 84 : 86}>
        <input id={id} defaultValue={value} />
        {spin ? <Spin /> : <Caret />}
      </ValueBox>
    </Field>
  );
}

function PickField({ label, active }) {
  return (
    <Field>
      <span>{label}</span>
      <Picked>
        <Pick type="button" $active={active}><Cursor fill={active ? '#cfe8f8' : '#fff'} />1 選択済み</Pick>
        <IconButton type="button" aria-label="クリア"><CloseIcon /></IconButton>
      </Picked>
    </Field>
  );
}

function FeatureDialog() {
  const [suppress, setSuppress] = useState(true);
  return (
    <Dialog onSubmit={(e) => e.preventDefault()}>
      <DialogTitle><MinusDot />フィーチャ編集</DialogTitle>
      <Fields>
        <SelectField id="ptype" label="パターン タイプ" icon={<FeatureIcon />} value="フィーチャ" />
        <PickField label="オブジェクト" active />
        <PickField label="方向" />
        <SelectField id="dtype" label="距離タイプ" icon={<ExtentIcon />} value="範囲" />
        <Field>
          <label htmlFor="suppress">抑制</label>
          <Inset>
            <Check id="suppress" $round checked={suppress} onChange={() => setSuppress(!suppress)} />
          </Inset>
        </Field>
        <ValueField id="qty1" label="数量" value="3" spin />
        <ValueField id="dist1" label="距離" value="-51.00 mm" />
        <SelectField id="dir1" label="方向のタイプ" icon={<DirectionIcon />} value="1 方向" />
        <ValueField id="qty2" label="数量" value="1" spin />
        <ValueField id="dist2" label="距離" value="0.00 mm" />
        <SelectField id="dir2" label="方向のタイプ" icon={<DirectionIcon />} value="1 方向" />
        <SelectField id="calc" label="計算オプション" value="調整" />
      </Fields>
      <DialogFooter>
        <InfoDot />
        <DialogButton>OK</DialogButton>
        <DialogButton type="button">キャンセル</DialogButton>
      </DialogFooter>
    </Dialog>
  );
}

/* ---------- navigation and timeline ---------- */

const navIcons = [
  {
    name: 'オービット', menu: true,
    art: <g stroke="#456"><ellipse cx="6" cy="6" rx="5.5" ry="2.3" /><path d="M6 1v10M4.500 2.500 6 .8l1.500 1.700M4.500 9.500 6 11.200l1.500-1.700" strokeWidth=".8" /><circle cx="6" cy="6" r="1" fill="#6af" /></g>,
  },
  {
    name: 'ルックアット',
    art: <g stroke="#555"><path d="M1 4.500h10v6.500H1z" fill="#ddd" /><path d="M2.500 4.500 4 2h4l1.500 2.500M3 7h6M3 9h6" /></g>,
  },
  {
    name: '画面移動',
    art: <path d="M3.500 11 1 7l1-.6 1.500 1.300V2.500h1.200V6 1.300h1.400V6 1.800h1.400V6 3h1.300v5L7.800 11z" stroke="#555" fill="#fff" strokeWidth=".9" />,
  },
  {
    name: 'ズーム',
    art: <g stroke="#555"><circle cx="4.5" cy="5" r="3" fill="#dff" /><path d="m6.500 7.500 3 3.500M8.500 2.500h3M10 1v3M8.500 6h3" strokeWidth="1.2" /></g>,
  },
  {
    name: 'フィット', menu: true,
    art: <g stroke="#555"><path d="M1 1h10v10H1z" strokeDasharray="2 1" stroke="#999" /><circle cx="5" cy="5" r="3.5" fill="#d5f0ec" /><path d="m7.500 7.500 3.500 4" strokeWidth="1.5" /></g>,
  },
  {
    name: '表示設定', menu: true,
    art: <g stroke="#456"><path d="M.7 1.500h10.600v7H.7z" fill="#7da7d9" /><path d="M3 11h6M6 8.500V11" /></g>,
  },
  {
    name: 'グリッド', menu: true,
    art: <g stroke="#777"><path d="M1 1h10v10H1z" fill="#a2a2a2" /><path d="M3.500 1v10M6 1v10M8.500 1v10M1 3.500h10M1 6h10M1 8.500h10" strokeWidth=".5" stroke="#c8c8c8" /></g>,
  },
  {
    name: 'ビューポート', menu: true,
    art: <g stroke="#3a5d87"><path d="M.7 1.500h10.600v9H.7z" fill="#9bbde6" /><path d="M6 1.500v9M.7 6h10.600" /></g>,
  },
];

const players = [
  ['最初へ', 'M2 1.500v9M10.500 2v8L4 6z'],
  ['前へ', 'M7 2v8L1.500 6zM9 4v4'],
  ['再生', 'M2.500 1v10L10 6z'],
  ['次へ', 'M5 2v8L10.500 6zM3 4v4'],
  ['最後へ', 'M10 1.500v9M1.500 2v8L8 6z'],
];

const ExtrudeStep = () => (
  <Icon w={13}>
    <path d="m1 3 2-2h6v7.500L7 11H1z" fill={BLUE} stroke={DARK} strokeWidth=".7" />
    <path d="M11 10V2" stroke="#333" />
  </Icon>
);
const PipeStep = () => (
  <Icon w={12}>
    <path d="m2 7.500 5.500-5.300q3.500-1 3 1.800L5 10.500" stroke="#44a05c" strokeWidth="1.5" fill="#cde9cf" />
    <circle cx="3" cy="9" r="2" stroke="#44a05c" fill="#fff" />
    <path d="m6 8.500 4-4.500" stroke="#d9884a" />
  </Icon>
);
const SphereStep = () => (
  <Icon w={12}>
    <circle cx="6" cy="6" r="5.5" fill="#8cc7f2" stroke="#3c8fcc" />
    <path d="M1 6.500q5 2 10 0" stroke="#60a9df" />
  </Icon>
);
const PatternStep = () => (
  <Icon w={12}>
    <path d="M3 2h6M2 3v6M3 10h6" stroke="#777" strokeDasharray="2 1" />
    <path d="M.5.5h3v3h-3zM8.500.5h3v3h-3zM.5 8.500h3v3h-3zM8.500 8.500h3v3h-3z" fill="#468fd0" stroke="none" />
  </Icon>
);
const CircularStep = () => (
  <Icon w={12}><circle cx="6" cy="6" r="4.5" stroke="#468fd0" strokeWidth="2" strokeDasharray="2.5 2.2" /></Icon>
);

const steps = [
  SketchIcon, ExtrudeStep, SketchIcon, PipeStep, PipeStep, SphereStep,
  PatternStep, SphereStep, PatternStep, CircularStep, CircularStep,
];

export default function App() {
  const [copies, setCopies] = useState([true, true]);
  const toggleCopy = (i) => setCopies(copies.map((c, n) => (n === i ? !c : c)));

  return (
    <Page>
      <GlobalStyle />
      <TopBar>
        <QuickBar>
          <IconButton aria-label="データパネル"><GridIcon /></IconButton>
          <IconButton aria-label="ファイル"><FileIcon /><Caret /></IconButton>
          <IconButton aria-label="保存"><SaveIcon /></IconButton>
          <IconButton aria-label="元に戻す"><UndoIcon /><Caret /></IconButton>
          <IconButton aria-label="やり直し" $dim><UndoIcon flip /><Caret /></IconButton>
        </QuickBar>
        <DocTab>
          <DocTitle><DocIcon />無題*</DocTitle>
          <IconButton aria-label="閉じる"><CloseIcon /></IconButton>
        </DocTab>
        <AccountBar>
          <NewTab aria-label="新規"><PlusIcon /></NewTab>
          <IconButton aria-label="拡張"><JobIcon /></IconButton>
          <IconButton aria-label="ジョブ"><ClockIcon /></IconButton>
          <IconButton aria-label="ヘルプ"><HelpIcon /></IconButton>
          <IconButton aria-label="アカウント"><Avatar /></IconButton>
        </AccountBar>
      </TopBar>

      <Ribbon>
        <Workspace>デザイン <Caret /></Workspace>
        <RibbonMain>
          <Tabs>
            <Tab href="#solid" $active>基準フィーチャ ソリッド</Tab>
            <Tab href="#surface">基準フィーチャ サーフェス</Tab>
            <Tab href="#sheet">シート メタル</Tab>
            <Tab href="#tool">ツール</Tab>
          </Tabs>
          <Groups>
            {ribbonGroups.map((group, i) => (
              <Group key={group.label} $last={i === ribbonGroups.length - 1}>
                <GroupIcons>
                  {group.icons.map((name) => <Tool key={name} aria-label={name}>{ribbonIcons[name]}</Tool>)}
                </GroupIcons>
                <GroupMenu>{group.label}<Caret /></GroupMenu>
              </Group>
            ))}
          </Groups>
        </RibbonMain>
      </Ribbon>

      <Canvas>
        <Model />
        <Pin $x={451} $y={347}><Check aria-label="コピー 2" checked={copies[0]} onChange={() => toggleCopy(0)} /></Pin>
        <Pin $x={462} $y={457}><Check aria-label="コピー 3" checked={copies[1]} onChange={() => toggleCopy(1)} /></Pin>
        <Pin $x={459} $y={462}>
          <svg width="20" height="22" viewBox="0 0 20 22">
            <path d="M7 2h5v9l4-2 1.500 2.500L10 19l-8-7.500L3.500 9 7 11z" fill="#19a5ec" stroke="#fff" strokeWidth="4" strokeLinejoin="round" />
            <path d="M7.500 2.500h4v9l4-2 1 2L10 18l-7-6.500 1-2 3.500 2z" fill="#19a5ec" stroke="#0b4a75" strokeWidth="1.2" />
          </svg>
        </Pin>
        <QuickInput $x={524} $y={269}>
          <ValueBox $w={44} $strong><input aria-label="距離" defaultValue="-51.00 mm" /></ValueBox>
          <Caret />
          <ValueBox $w={36}><input aria-label="数量" defaultValue="3" /><Spin /></ValueBox>
        </QuickInput>
        <ViewCube />
        <BrowserPanel />
        <FeatureDialog />
        <NavBar>
          {navIcons.map((n) => (
            <IconButton key={n.name} aria-label={n.name}><Icon w={12}>{n.art}</Icon>{n.menu && <Caret s={4} />}</IconButton>
          ))}
        </NavBar>
        <Status>2 個の選択</Status>
      </Canvas>

      <Timeline>
        <Player>
          {players.map(([name, d]) => (
            <IconButton key={name} aria-label={name}><Icon w={11}><path d={d} fill="currentColor" strokeWidth="1.5" /></Icon></IconButton>
          ))}
        </Player>
        <Track>
          <Steps>
            {steps.map((StepIcon, i) => (
              <Step key={i} aria-label={`履歴 ${i + 1}`} $active={i === 5} $rolledBack={i > 6}><StepIcon /></Step>
            ))}
          </Steps>
          <svg width="176" height="6" viewBox="0 0 176 6">
            <path d="M7.500 3.500h160M7.500 1v3M23.500 1v3M39.500 1v3M55.500 1v3M71.500 1v3M87.500 1v3M103.500 1v3M119.500 1v3M135.500 1v3M151.500 1v3M167.500 1v3" stroke="#b0b0b0" fill="none" />
          </svg>
          <Marker width="9" height="22" viewBox="0 0 9 22">
            <path d="M1 1h7v4L5 8v13H4V8L1 5z" fill="#444" />
          </Marker>
        </Track>
        <IconButton aria-label="設定"><Gear s={12} /></IconButton>
      </Timeline>
    </Page>
  );
}
